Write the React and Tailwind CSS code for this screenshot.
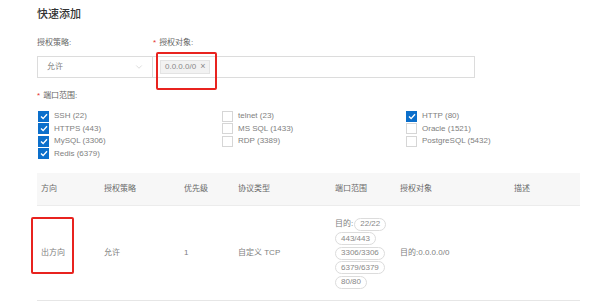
import { ChevronDown } from "lucide-react";

const ports = [
  [
    { name: "SSH (22)", on: true },
    { name: "HTTPS (443)", on: true },
    { name: "MySQL (3306)", on: true },
    { name: "Redis (6379)", on: true },
  ],
  [
    { name: "telnet (23)", on: false },
    { name: "MS SQL (1433)", on: false },
    { name: "RDP (3389)", on: false },
  ],
  [
    { name: "HTTP (80)", on: true },
    { name: "Oracle (1521)", on: false },
    { name: "PostgreSQL (5432)", on: false },
  ],
];

const headers = ["方向", "授权策略", "优先级", "协议类型", "端口范围", "授权对象", "描述"];

function Check({ on, name }) {
  return (
    <div className="flex items-center h-[12.5px]">
      <span
        className={
          on
            ? "ml-[1px] w-[11px] h-[11px] bg-[#0b6fcb] flex items-center justify-center"
            : "ml-[1px] w-[11px] h-[11px] border border-[#d6d6d6] bg-white"
        }
      >
        {on && (
          <svg width="8" height="7" viewBox="0 0 8 7" fill="none">
            <path d="M1 3.6 L3.1 5.6 L7 1.2" stroke="white" strokeWidth="1.4" />
          </svg>
        )}
      </span>
      <span className="ml-[5px] text-[8px] text-[#808080]">{name}</span>
    </div>
  );
}

function Pill({ children }) {
  return (
    <span className="inline-flex items-center h-[13px] px-[5px] rounded-full border border-[#dcdcdc] text-[8px] text-[#888] bg-white">
      {children}
    </span>
  );
}

export default function App() {
  return (
    <div className="w-[599px] h-[304px] overflow-hidden bg-white pl-[37px] font-['Liberation_Sans','Noto_Sans_CJK_SC',sans-serif]">
      <div className="h-[21px] pt-[7px] leading-[14px] text-[11px] font-medium text-[#333]">
        快速添加
      </div>

      <div className="mt-[16px] flex h-[12px] leading-[12px] text-[8px] text-[#666]">
        <div className="w-[116px]">授权策略:</div>
        <div>
          <span className="text-[#e5322d] mr-[3px]">*</span>授权对象:
        </div>
      </div>

      <div className="mt-[7px] flex h-[22px]">
        <div className="w-[116px] border border-[#dcdcdc] flex items-center justify-between pl-[9px] pr-[8px]">
          <span className="text-[8px] text-[#808080]">允许</span>
          <ChevronDown size={10} strokeWidth={1.2} className="text-[#bbb]" />
        </div>
        <div className="relative w-[322px] border border-l-0 border-[#dcdcdc] flex items-center pl-[7px]">
          <span className="h-[14px] flex items-center gap-[4px] px-[4px] bg-[#f2f2f2] border border-[#e3e3e3] text-[8px] text-[#888]">
            0.0.0.0/0 <span className="text-[9px]">×</span>
          </span>
          <div className="absolute left-[3px] top-[-5px] w-[61px] h-[38px] border-2 border-[#e8231f] rounded-[2px]" />
        </div>
      </div>

      <div className="mt-[12px] h-[12px] leading-[12px] text-[8px] text-[#666]">
        <span className="text-[#e5322d] mr-[3px]">*</span>端口范围:
      </div>

      <div className="mt-[8px] grid grid-cols-[184px_184px_184px]">
        {ports.map((col, i) => (
          <div key={i}>
            {col.map((p) => (
              <Check key={p.name} {...p} />
            ))}
          </div>
        ))}
      </div>

      <div className="mt-[13px] w-[543px] text-[8px]">
        <div className="grid grid-cols-[63px_80px_54px_97px_65px_114px_1fr] h-[33px] items-center bg-[#f7f7f7] border-b border-[#ececec] text-[#6a6a6a]">
          {headers.map((h) => (
            <div key={h} className="pl-[4px]">
              {h}
            </div>
          ))}
        </div>
        <div className="grid grid-cols-[63px_80px_54px_97px_65px_114px_1fr] h-[95px] items-center border-b border-[#e6e6e6] text-[#808080]">
          <div className="relative pl-[4px]">
            出方向
            <div className="absolute left-[-6px] top-[-30px] w-[43px] h-[57px] border-2 border-[#e8231f] rounded-[2px]" />
          </div>
          <div className="pl-[4px]">允许</div>
          <div className="pl-[4px]">1</div>
          <div className="pl-[4px]">自定义 TCP</div>
          <div className="pl-[4px] flex flex-col items-start gap-[1.5px]">
            <div className="flex items-center">
              <span className="mr-[1px]">目的:</span>
              <Pill>22/22</Pill>
            </div>
            <Pill>443/443</Pill>
            <Pill>3306/3306</Pill>
            <Pill>6379/6379</Pill>
            <Pill>80/80</Pill>
          </div>
          <div className="pl-[4px]">目的:0.0.0.0/0</div>
          <div className="pl-[4px]"></div>
        </div>
      </div>
    </div>
  );
}
